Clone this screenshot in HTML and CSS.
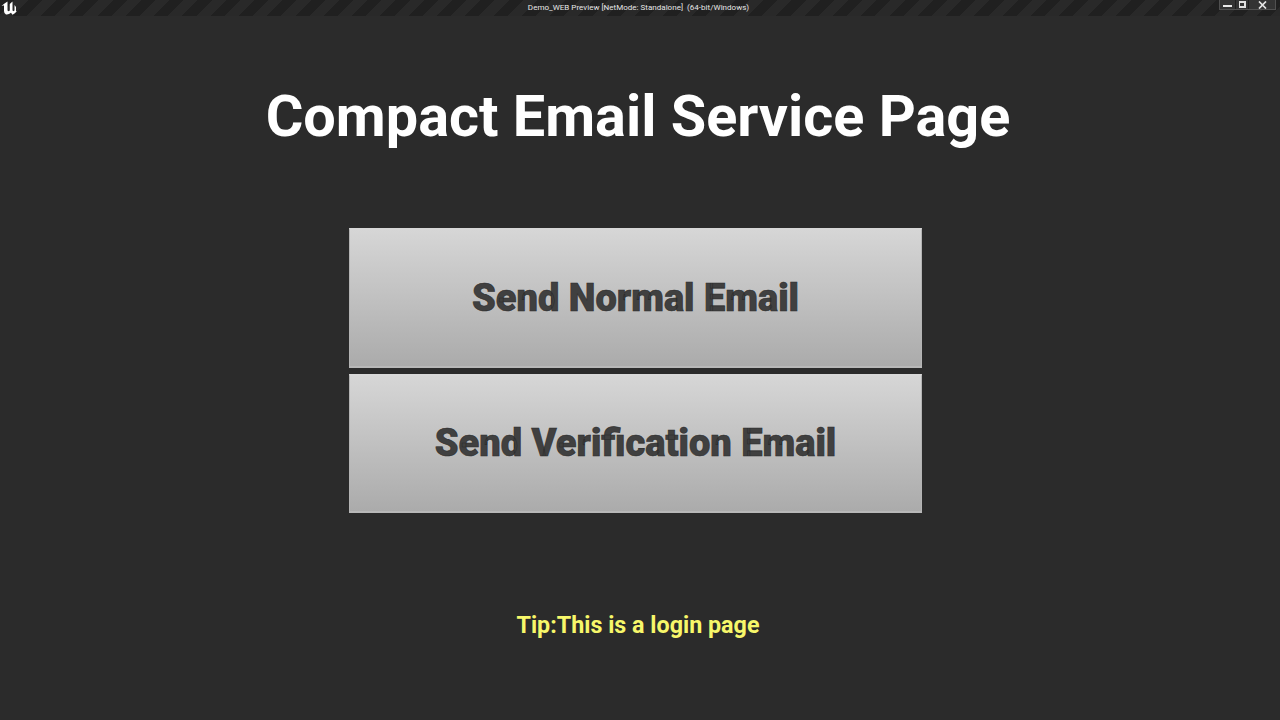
FILE: index.html
```html
<!DOCTYPE html>
<html lang="en">
<head>
<meta charset="utf-8">
<title>Demo_WEB Preview</title>
<link rel="stylesheet" href="styles.css">
</head>
<body>
<header class="titlebar">
  <svg class="logo" viewBox="0 0 16 14" width="16" height="14" aria-hidden="true">
    <path d="M0.5 5 L3.5 2.5 L6.5 0.5 L6.5 9 Q6.5 10.5 8 10 L8.8 9.4 L8.8 3 L11.5 0.5 L11.5 9.5 L12.5 10.2 L13.5 9.4 L13.5 4 L15 6 L15 10 L15.8 10 Q14 13 11.5 13.8 L10 11.8 Q7.5 14 5 13.5 Q3 12.8 3 10 L3 4.6 Q1.8 4.4 0.5 5 Z" fill="#fff"/>
  </svg>
  <span class="window-title">Demo_WEB Preview [NetMode: Standalone]&nbsp; (64-bit/Windows)</span>
  <div class="controls">
    <div class="ctl ctl-min"><span class="min-bar"></span></div>
    <div class="ctl ctl-max"><span class="max-box"></span></div>
    <div class="ctl ctl-close">
      <svg viewBox="0 0 9 8" width="9" height="8" aria-hidden="true"><path d="M1 0.5 L8 7.5 M8 0.5 L1 7.5" stroke="#e4e4e4" stroke-width="1.7" fill="none"/></svg>
    </div>
  </div>
</header>
<main class="page">
  <h1 class="heading">Compact Email Service Page</h1>
  <div class="buttons">
    <button class="btn" type="button">Send Normal Email</button>
    <button class="btn btn-short" type="button">Send Verification Email</button>
  </div>
  <p class="tip">Tip:This is a login page</p>
</main>
</body>
</html>
```
FILE: styles.css
```css
* { box-sizing: border-box; }
html, body { margin: 0; height: 100%; }
body {
  width: 1280px;
  height: 720px;
  overflow: hidden;
  background: #2b2b2b;
  font-family: Roboto, "Liberation Sans", sans-serif;
  display: flex;
  flex-direction: column;
}
.titlebar {
  height: 16px;
  flex: none;
  position: relative;
  background: repeating-linear-gradient(135deg, #202020 0 10px, #292929 10px 20px);
  display: flex;
  align-items: flex-start;
  justify-content: center;
}
.logo { position: absolute; left: 1px; top: 1px; }
.window-title {
  font-size: 8px;
  line-height: 15px;
  color: #e6e6e6;
  margin-left: -3px;
  letter-spacing: 0.02px;
}
.controls {
  position: absolute;
  top: 0;
  left: 1219px;
  display: flex;
  height: 10px;
  background: #333;
  border: 1px solid #505050;
  border-top: 0;
}
.ctl { display: flex; align-items: center; justify-content: center; height: 9px; }
.ctl-min { width: 16px; border-right: 1px solid #1f1f1f; }
.ctl-max { width: 13px; border-right: 1px solid #1f1f1f; }
.ctl-close { width: 26px; }
.min-bar { width: 9px; height: 2px; background: #e8e8e8; margin-top: 2px; }
.max-box { width: 7px; height: 7px; border: 2px solid #e0e0e0; border-left-width: 1px; }
.page {
  flex: 1;
  display: flex;
  flex-direction: column;
  align-items: center;
}
.heading {
  margin: 65px 0 0 -4px;
  font-size: 57.6px;
  line-height: 72px;
  font-weight: 700;
  color: #fff;
}
.buttons {
  margin: 75px 0 0 -9px;
  display: flex;
  flex-direction: column;
  gap: 6px;
}
.btn {
  width: 573px;
  height: 140px;
  padding: 0;
  font-family: inherit;
  font-size: 38px;
  font-weight: 900;
  color: #404040;
  -webkit-text-stroke: 0.6px #2b2b2b;
  background: linear-gradient(#d6d6d6, #ababab);
  border: 0;
  border-top: 2px solid #d8d8d8;
  border-left: 1px solid #b4b4b4;
  border-right: 1px solid #b4b4b4;
  border-bottom: 2px solid #b8b8b8;
}
.btn-short { height: 139px; padding-bottom: 2px; }
.tip {
  margin: 93px 0 0 -4px;
  font-size: 23.3px;
  line-height: 38px;
  font-weight: 700;
  color: #f7f76a;
}
```
